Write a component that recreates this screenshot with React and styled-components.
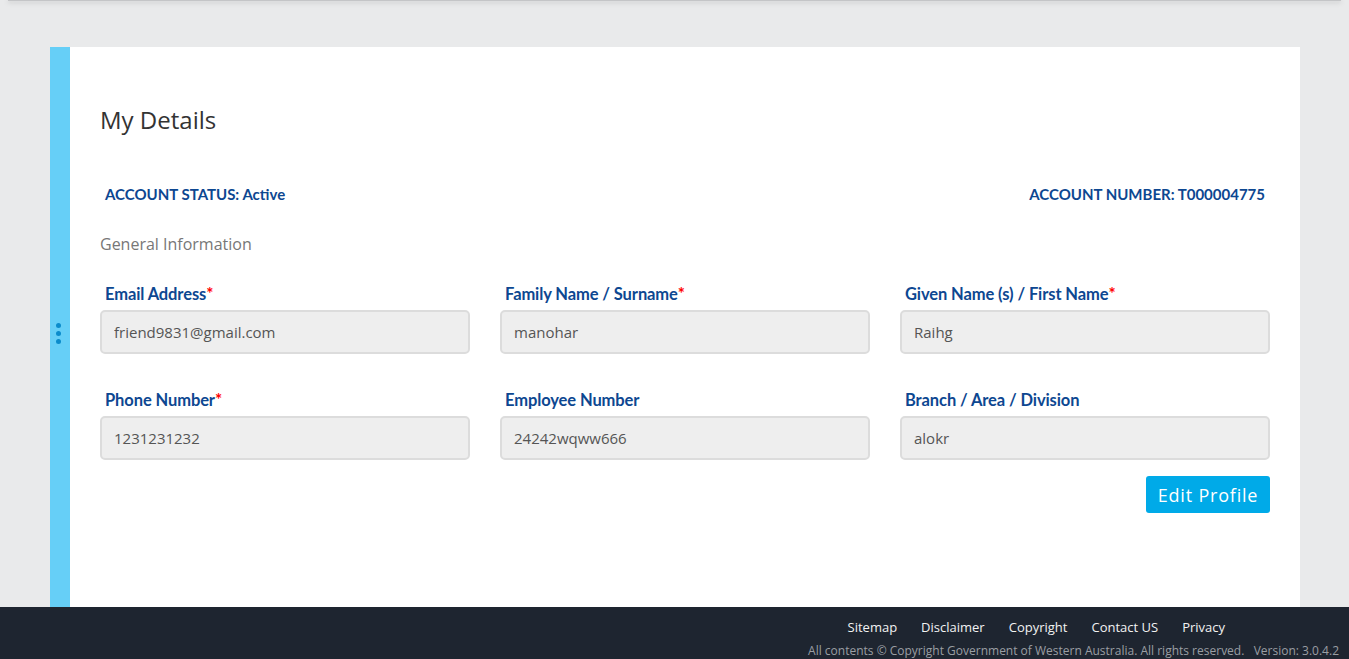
import React from "react";
import styled, { createGlobalStyle } from "styled-components";

const Global = createGlobalStyle`
  html, body { margin: 0; padding: 0; height: 100%; }
  body {
    background: #e9eaeb;
    font-family: "Open Sans", "Liberation Sans", sans-serif;
    overflow: hidden;
  }
  #root { height: 100%; }
`;

const Page = styled.div`
  height: 659px;
  display: flex;
  flex-direction: column;
`;

const Header = styled.div`
  height: 1px;
  margin: 0 8px;
  background: #c4c5c7;
  box-shadow: 0 1px 5px rgba(0, 0, 0, 0.35);
  flex: none;
`;

const Main = styled.main`
  flex: 1;
  overflow: hidden;
  padding: 46px 49px 0 50px;
`;

const Card = styled.section`
  display: flex;
  height: 572px;
  background: #fff;
`;

const Strip = styled.div`
  width: 20px;
  flex: none;
  background: #66cff7;
  display: flex;
  flex-direction: column;
  align-items: center;
  justify-content: center;
  gap: 3px;
  padding-right: 4px;
  box-sizing: border-box;
`;

const Dot = styled.span`
  width: 5px;
  height: 5px;
  border-radius: 50%;
  background: #0b8ccc;
`;

const Content = styled.div`
  flex: 1;
  padding: 58px 30px 0 30px;
`;

const Title = styled.h2`
  margin: 0;
  font-size: 24px;
  line-height: 30px;
  font-weight: 400;
  color: #333;
`;

const StatusRow = styled.div`
  display: flex;
  justify-content: space-between;
  margin-top: 49px;
  padding: 0 5px;
`;

const Strong = styled.span`
  font-family: "Lato", "Liberation Sans", sans-serif;
  font-weight: 700;
  font-size: 15px;
  line-height: 20px;
  color: #0d4791;
`;

const Section = styled.h3`
  margin: 29px 0 0;
  font-size: 16px;
  line-height: 22px;
  font-weight: 400;
  color: #777;
`;

const Grid = styled.div`
  display: grid;
  grid-template-columns: repeat(3, 1fr);
  column-gap: 30px;
  row-gap: 36px;
  margin-top: 29px;
`;

const Field = styled.div`
  display: flex;
  flex-direction: column;
  gap: 6px;
`;

const Label = styled(Strong)`
  padding-left: 5px;
  font-size: 16.5px;
  letter-spacing: -0.1px;
`;

const Req = styled.span`
  color: #f00;
  font-size: 17px;
`;

const Input = styled.input`
  box-sizing: border-box;
  height: 44px;
  width: 100%;
  border: 2px solid #dcdcdc;
  border-radius: 5px;
  background: #eee;
  padding: 0 12px;
  font-family: "Open Sans", "Liberation Sans", sans-serif;
  font-size: 15px;
  color: #555;
  outline: none;
`;

const Actions = styled.div`
  display: flex;
  justify-content: flex-end;
  margin-top: 16px;
`;

const Button = styled.button`
  height: 37px;
  width: 124px;
  border: none;
  border-radius: 3px;
  background: #00aae8;
  color: #fff;
  font-family: "Open Sans", "Liberation Sans", sans-serif;
  font-size: 18px;
  letter-spacing: 0.8px;
  padding: 0;
  cursor: pointer;
`;

const Footer = styled.footer`
  height: 52px;
  flex: none;
  background: #1e2530;
  display: flex;
  flex-direction: column;
  align-items: flex-end;
  padding: 11px 10px 0 0;
  box-sizing: border-box;
`;

const Links = styled.nav`
  display: flex;
  gap: 24px;
  margin-right: 114px;
`;

const Link = styled.a`
  color: #f2f2f2;
  font-size: 13px;
  line-height: 18px;
  text-decoration: none;
`;

const Copy = styled.div`
  margin-top: 7px;
  color: #9a9ea3;
  font-size: 12px;
  line-height: 16px;
  white-space: pre;
`;

const fields = [
  { label: "Email Address", value: "friend9831@gmail.com", req: true },
  { label: "Family Name / Surname", value: "manohar", req: true },
  { label: "Given Name (s) / First Name", value: "Raihg", req: true },
  { label: "Phone Number", value: "1231231232", req: true },
  { label: "Employee Number", value: "24242wqww666" },
  { label: "Branch / Area / Division", value: "alokr" },
];

export default function App() {
  return (
    <>
      <Global />
      <Page>
        <Header />
        <Main>
          <Card>
            <Strip>
              <Dot />
              <Dot />
              <Dot />
            </Strip>
            <Content>
              <Title>My Details</Title>
              <StatusRow>
                <Strong>ACCOUNT STATUS: Active</Strong>
                <Strong>ACCOUNT NUMBER: T000004775</Strong>
              </StatusRow>
              <Section>General Information</Section>
              <Grid>
                {fields.map((f) => (
                  <Field key={f.label}>
                    <Label>
                      {f.label}
                      {f.req && <Req>*</Req>}
                    </Label>
                    <Input value={f.value} readOnly />
                  </Field>
                ))}
              </Grid>
              <Actions>
                <Button>Edit Profile</Button>
              </Actions>
            </Content>
          </Card>
        </Main>
        <Footer>
          <Links>
            <Link href="#">Sitemap</Link>
            <Link href="#">Disclaimer</Link>
            <Link href="#">Copyright</Link>
            <Link href="#">Contact US</Link>
            <Link href="#">Privacy</Link>
          </Links>
          <Copy>{"All contents © Copyright Government of Western Australia. All rights reserved.   Version: 3.0.4.2"}</Copy>
        </Footer>
      </Page>
    </>
  );
}
